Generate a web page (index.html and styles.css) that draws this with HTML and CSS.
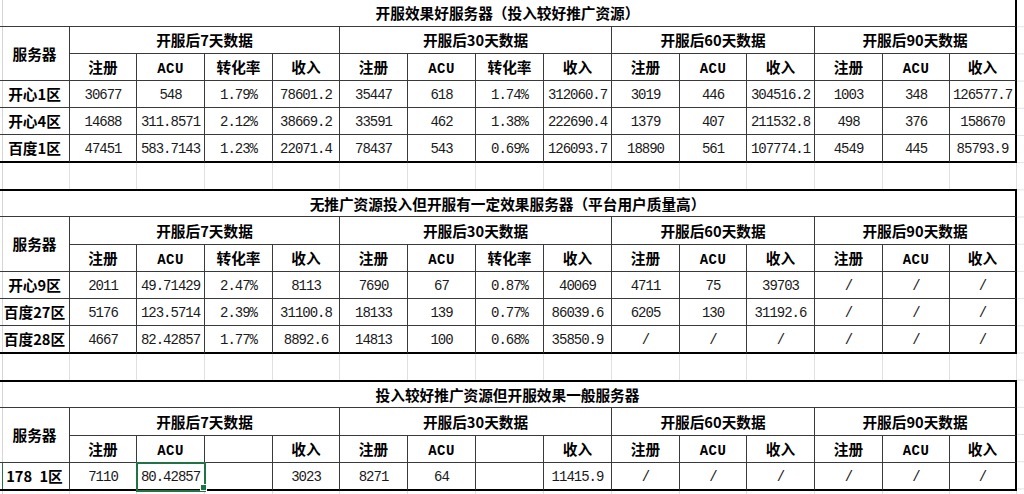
FILE: index.html
```html
<!DOCTYPE html>
<html lang="zh-CN">
<head>
<meta charset="utf-8">
<title>开服效果服务器数据</title>
<link rel="stylesheet" href="styles.css">
</head>
<body>
<div class="sheet">

  <table class="block first">
    <colgroup>
      <col class="c70"><col class="c67"><col class="c68"><col class="c68"><col class="c67"><col class="c68"><col class="c68"><col class="c68"><col class="c68"><col class="c68"><col class="c67"><col class="c68"><col class="c68"><col class="c67"><col class="c67">
    </colgroup>
    <tr class="h27"><td class="hd title last" colspan="15">开服效果好服务器（投入较好推广资源）</td></tr>
    <tr class="h27">
      <td class="hd" rowspan="2">服务器</td>
      <td class="hd" colspan="4">开服后7天数据</td>
      <td class="hd" colspan="4">开服后30天数据</td>
      <td class="hd" colspan="3">开服后60天数据</td>
      <td class="hd last" colspan="3">开服后90天数据</td>
    </tr>
    <tr class="h27">
      <td class="hd">注册</td><td class="acu">ACU</td><td class="hd">转化率</td><td class="hd">收入</td>
      <td class="hd">注册</td><td class="acu">ACU</td><td class="hd">转化率</td><td class="hd">收入</td>
      <td class="hd">注册</td><td class="acu">ACU</td><td class="hd">收入</td>
      <td class="hd">注册</td><td class="acu">ACU</td><td class="hd last">收入</td>
    </tr>
    <tr class="h27">
      <td class="hd">开心1区</td>
      <td class="num">30677</td><td class="num">548</td><td class="num">1.79%</td><td class="num">78601.2</td>
      <td class="num">35447</td><td class="num">618</td><td class="num">1.74%</td><td class="num">312060.7</td>
      <td class="num">3019</td><td class="num">446</td><td class="num">304516.2</td>
      <td class="num">1003</td><td class="num">348</td><td class="num last">126577.7</td>
    </tr>
    <tr class="h27">
      <td class="hd">开心4区</td>
      <td class="num">14688</td><td class="num">311.8571</td><td class="num">2.12%</td><td class="num">38669.2</td>
      <td class="num">33591</td><td class="num">462</td><td class="num">1.38%</td><td class="num">222690.4</td>
      <td class="num">1379</td><td class="num">407</td><td class="num">211532.8</td>
      <td class="num">498</td><td class="num">376</td><td class="num last">158670</td>
    </tr>
    <tr class="h28 end">
      <td class="hd">百度1区</td>
      <td class="num">47451</td><td class="num">583.7143</td><td class="num">1.23%</td><td class="num">22071.4</td>
      <td class="num">78437</td><td class="num">543</td><td class="num">0.69%</td><td class="num">126093.7</td>
      <td class="num">18890</td><td class="num">561</td><td class="num">107774.1</td>
      <td class="num">4549</td><td class="num">445</td><td class="num last">85793.9</td>
    </tr>
  </table>

  <div class="gap"><span></span><span></span><span></span><span></span><span></span><span></span><span></span><span></span><span></span><span></span><span></span><span></span><span></span><span></span><span></span></div>

  <table class="block boxed">
    <colgroup>
      <col class="c70"><col class="c67"><col class="c68"><col class="c68"><col class="c67"><col class="c68"><col class="c68"><col class="c68"><col class="c68"><col class="c68"><col class="c67"><col class="c68"><col class="c68"><col class="c67"><col class="c67">
    </colgroup>
    <tr class="h26"><td class="hd title last" colspan="15">无推广资源投入但开服有一定效果服务器（平台用户质量高）</td></tr>
    <tr class="h28">
      <td class="hd" rowspan="2">服务器</td>
      <td class="hd" colspan="4">开服后7天数据</td>
      <td class="hd" colspan="4">开服后30天数据</td>
      <td class="hd" colspan="3">开服后60天数据</td>
      <td class="hd last" colspan="3">开服后90天数据</td>
    </tr>
    <tr class="h27">
      <td class="hd">注册</td><td class="acu">ACU</td><td class="hd">转化率</td><td class="hd">收入</td>
      <td class="hd">注册</td><td class="acu">ACU</td><td class="hd">转化率</td><td class="hd">收入</td>
      <td class="hd">注册</td><td class="acu">ACU</td><td class="hd">收入</td>
      <td class="hd">注册</td><td class="acu">ACU</td><td class="hd last">收入</td>
    </tr>
    <tr class="h27">
      <td class="hd">开心9区</td>
      <td class="num">2011</td><td class="num">49.71429</td><td class="num">2.47%</td><td class="num">8113</td>
      <td class="num">7690</td><td class="num">67</td><td class="num">0.87%</td><td class="num">40069</td>
      <td class="num">4711</td><td class="num">75</td><td class="num">39703</td>
      <td class="num">/</td><td class="num">/</td><td class="num last">/</td>
    </tr>
    <tr class="h27">
      <td class="hd">百度27区</td>
      <td class="num">5176</td><td class="num">123.5714</td><td class="num">2.39%</td><td class="num">31100.8</td>
      <td class="num">18133</td><td class="num">139</td><td class="num">0.77%</td><td class="num">86039.6</td>
      <td class="num">6205</td><td class="num">130</td><td class="num">31192.6</td>
      <td class="num">/</td><td class="num">/</td><td class="num last">/</td>
    </tr>
    <tr class="h28 end">
      <td class="hd">百度28区</td>
      <td class="num">4667</td><td class="num">82.42857</td><td class="num">1.77%</td><td class="num">8892.6</td>
      <td class="num">14813</td><td class="num">100</td><td class="num">0.68%</td><td class="num">35850.9</td>
      <td class="num">/</td><td class="num">/</td><td class="num">/</td>
      <td class="num">/</td><td class="num">/</td><td class="num last">/</td>
    </tr>
  </table>

  <div class="gap"><span></span><span></span><span></span><span></span><span></span><span></span><span></span><span></span><span></span><span></span><span></span><span></span><span></span><span></span><span></span></div>

  <table class="block boxed">
    <colgroup>
      <col class="c70"><col class="c67"><col class="c68"><col class="c68"><col class="c67"><col class="c68"><col class="c68"><col class="c68"><col class="c68"><col class="c68"><col class="c67"><col class="c68"><col class="c68"><col class="c67"><col class="c67">
    </colgroup>
    <tr class="h26"><td class="hd title last" colspan="15">投入较好推广资源但开服效果一般服务器</td></tr>
    <tr class="h28">
      <td class="hd" rowspan="2">服务器</td>
      <td class="hd" colspan="4">开服后7天数据</td>
      <td class="hd" colspan="4">开服后30天数据</td>
      <td class="hd" colspan="3">开服后60天数据</td>
      <td class="hd last" colspan="3">开服后90天数据</td>
    </tr>
    <tr class="h27">
      <td class="hd">注册</td><td class="acu">ACU</td><td class="hd"></td><td class="hd">收入</td>
      <td class="hd">注册</td><td class="acu">ACU</td><td class="hd"></td><td class="hd">收入</td>
      <td class="hd">注册</td><td class="acu">ACU</td><td class="hd">收入</td>
      <td class="hd">注册</td><td class="acu">ACU</td><td class="hd last">收入</td>
    </tr>
    <tr class="h28 end">
      <td class="hd active-row">178&ensp;1区</td>
      <td class="num">7110</td><td class="num sel">80.42857</td><td class="num"></td><td class="num">3023</td>
      <td class="num">8271</td><td class="num">64</td><td class="num"></td><td class="num">11415.9</td>
      <td class="num">/</td><td class="num">/</td><td class="num">/</td>
      <td class="num">/</td><td class="num">/</td><td class="num last">/</td>
    </tr>
  </table>

  <div class="gap tail"><span></span><span></span><span></span><span></span><span></span><span></span><span></span><span></span><span></span><span></span><span></span><span></span><span></span><span></span><span></span></div>

</div>
</body>
</html>
```

FILE: styles.css
```css
html, body {
  margin: 0;
  padding: 0;
  background: #ffffff;
}

.sheet {
  width: 1024px;
  height: 494px;
  overflow: hidden;
  display: flex;
  flex-direction: column;
  background-color: #ffffff;
  background-image:
    linear-gradient(to right, transparent 2px, #d6d6d6 2px, #d6d6d6 3px, transparent 3px),
    linear-gradient(to bottom, transparent 26.2px, #e2e2e2 26.2px, #e2e2e2 27.2px);
  background-size: 100% 100%, 7px 27.2px;
  background-position: 0 0, 1017px 0;
  background-repeat: no-repeat, repeat-y;
  font-family: "Noto Sans CJK SC", "Noto Sans", sans-serif;
  color: #000;
}

.block {
  border-collapse: separate;
  border-spacing: 0;
  table-layout: fixed;
  width: 1017px;
  flex: none;
}

.block.boxed {
  border-top: 2px solid #000;
}

.c70 { width: 70px; }
.c67 { width: 67px; }
.c68 { width: 68px; }

.h26 { height: 26px; }
.h27 { height: 27px; }
.h28 { height: 28px; }

.block td {
  padding: 0;
  border-right: 1px solid #3a3a3a;
  border-bottom: 1px solid #3a3a3a;
  text-align: center;
  vertical-align: middle;
  white-space: nowrap;
  overflow: hidden;
  line-height: 16px;
}

.block td.last {
  border-right: 2px solid #000;
}

.block tr.end td {
  border-bottom: 2px solid #000;
}

.hd {
  font-family: "Noto Sans CJK SC", "Noto Sans", sans-serif;
  font-weight: 700;
  font-size: 14.67px;
}

.title {
  padding-top: 1px;
}

.block td.acu {
  font-family: "Liberation Mono", "DejaVu Sans Mono", monospace;
  font-weight: 700;
  font-size: 14px;
  letter-spacing: 0.4px;
  padding-top: 4px;
}

.block td.num {
  font-family: "Liberation Mono", "DejaVu Sans Mono", monospace;
  font-size: 14px;
  letter-spacing: -1px;
  color: #1a1a1a;
  padding-top: 1px;
}

.block td.sel {
  position: relative;
  overflow: visible;
  outline: 2px solid #217346;
  outline-offset: -1px;
}

.block td.sel::after {
  content: "";
  position: absolute;
  right: -3px;
  bottom: -2px;
  width: 5px;
  height: 5px;
  background: #217346;
  border: 1px solid #ffffff;
  box-sizing: content-box;
}

.active-row {
  background-image: linear-gradient(to right, transparent 2px, #217346 2px, #217346 3px, transparent 3px);
  background-repeat: no-repeat;
}

.gap {
  flex: none;
  height: 26px;
  display: grid;
  grid-template-columns: 70px 67px 68px 68px 67px 68px 68px 68px 68px 68px 67px 68px 68px 67px 67px;
  width: 1017px;
}

.gap.tail {
  height: 20px;
}

.gap span {
  border-right: 1px solid #e0e0e0;
}
```
